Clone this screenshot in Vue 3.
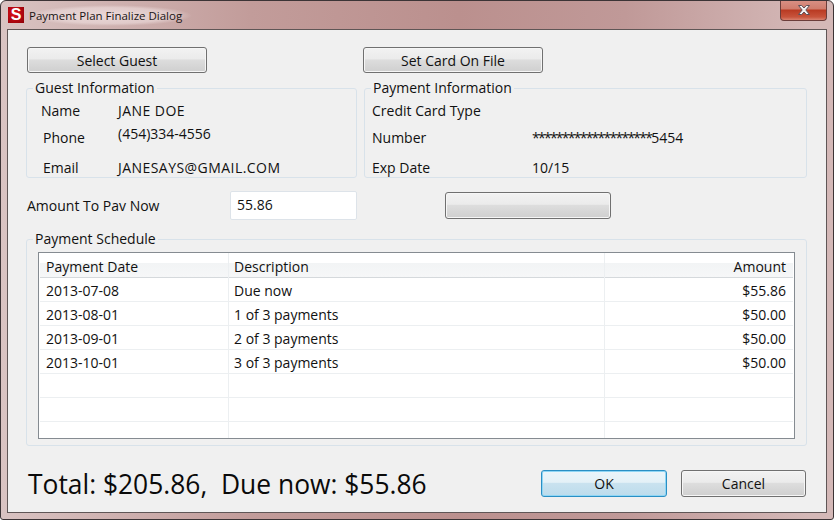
<script setup>
const rows = [
  { date: '2013-07-08', desc: 'Due now', amount: '$55.86' },
  { date: '2013-08-01', desc: '1 of 3 payments', amount: '$50.00' },
  { date: '2013-09-01', desc: '2 of 3 payments', amount: '$50.00' },
  { date: '2013-10-01', desc: '3 of 3 payments', amount: '$50.00' },
  { date: '', desc: '', amount: '' },
  { date: '', desc: '', amount: '' },
  { date: '', desc: '', amount: '' }
]
</script>

<template>
  <div class="window">
    <header class="titlebar">
      <span class="app-icon">S</span>
      <span class="title">Payment Plan Finalize Dialog</span>
      <span class="close">
        <svg width="18" height="12" viewBox="0 0 18 12">
          <path d="M3.5 1.5h3.2L9 4l2.3-2.5h3.2L10.8 6l3.7 4.5h-3.2L9 8l-2.3 2.5H3.5L7.2 6z" fill="#f4f1f1" stroke="#5c5058" stroke-width="1"/>
        </svg>
      </span>
    </header>
    <main class="client">
      <div class="top-buttons">
        <button class="btn wide">Select Guest</button>
        <button class="btn wide">Set Card On File</button>
      </div>
      <div class="groups">
        <fieldset class="group guest">
          <legend>Guest Information</legend>
          <div class="g-row g-name"><span class="g-label">Name</span><span class="caps">JANE DOE</span></div>
          <div class="g-row g-phone"><span class="g-label shifted">Phone</span><span class="phone-value">(454)334-4556</span></div>
          <div class="g-row g-email"><span class="g-label shifted">Email</span><span class="caps">JANESAYS@GMAIL.COM</span></div>
        </fieldset>
        <fieldset class="group pay">
          <legend>Payment Information</legend>
          <div class="p-row g-name"><span class="p-label">Credit Card Type</span><span></span></div>
          <div class="p-row g-phone"><span class="p-label">Number</span><span class="stars">********************<span class="digits">5454</span></span></div>
          <div class="p-row g-email"><span class="p-label">Exp Date</span><span>10/15</span></div>
        </fieldset>
      </div>
      <div class="amount-row">
        <label class="amount-label">Amount To Pav Now</label>
        <div class="amount-input">55.86</div>
        <button class="btn blank"></button>
      </div>
      <fieldset class="group schedule">
        <legend>Payment Schedule</legend>
        <div class="table">
          <div class="t-row t-head">
            <span>Payment Date</span><span>Description</span><span class="right">Amount</span>
          </div>
          <div v-for="(r, i) in rows" :key="i" class="t-row">
            <span>{{ r.date }}</span><span>{{ r.desc }}</span><span class="right">{{ r.amount }}</span>
          </div>
        </div>
      </fieldset>
      <footer class="footer">
        <div class="total">Total: $205.86,&nbsp; Due now: $55.86</div>
        <button class="btn ok">OK</button>
        <button class="btn cancel">Cancel</button>
      </footer>
    </main>
  </div>
</template>

<style>
html, body { margin: 0; background: #fff; }
</style>

<style scoped>
* { box-sizing: border-box; }
.window {
  width: 834px;
  height: 520px;
  display: flex;
  flex-direction: column;
  padding: 0 6px 6px;
  border: 1px solid #3c3436;
  border-radius: 6px 6px 3px 3px;
  background: linear-gradient(90deg, #d9c3c2 0%, #c29c9a 30%, #bb908e 55%, #c09998 75%, #d4b8b7 97%);
  font-family: "Open Sans", "Noto Sans", sans-serif;
  font-size: 14px;
  color: #111;
  overflow: hidden;
  margin: 0;
}
.titlebar {
  height: 28px;
  margin: 0 -1px;
  display: flex;
  align-items: center;
  flex: none;
  position: relative;
}
.app-icon {
  width: 16px;
  height: 16px;
  background: radial-gradient(circle at 40% 40%, #e0101a, #8c0008);
  color: #fff;
  font: bold 16px/16px "Liberation Sans", sans-serif;
  text-align: center;
  flex: none;
  margin-left: 2px;
}
.title {
  margin-left: 5px;
  font-size: 11.5px;
  color: #1a1414;
  background: radial-gradient(closest-side, rgba(240,225,225,.8), rgba(240,225,225,.55) 75%, rgba(240,225,225,0));
  padding: 3px 10px 3px 0;
}
.close {
  position: absolute;
  right: 1px;
  top: -1px;
  width: 47px;
  height: 21px;
  display: flex;
  align-items: center;
  justify-content: center;
  border: 1px solid #6b3d3a;
  border-top: none;
  border-radius: 0 0 4px 4px;
  background: linear-gradient(#d99186 0%, #d07c6c 45%, #b93a22 50%, #c8543c 85%, #d9826f 100%);
}
.client {
  flex: 1;
  background: #f0f0f0;
  border: 1px solid #5f5656;
  padding: 17px 18px 0 18px;
  display: flex;
  flex-direction: column;
  min-height: 0;
}
.btn {
  font: inherit;
  color: #111;
  border: 1px solid #707070;
  border-radius: 3px;
  background: linear-gradient(#f2f2f2 0%, #ebebeb 45%, #dddddd 50%, #cfcfcf 100%);
  box-shadow: inset 0 0 0 1px #f6f6f6;
  padding: 0;
}
.top-buttons {
  display: flex;
  gap: 156px;
  margin-left: 1px;
}
.wide { width: 180px; height: 26px; }
.groups {
  display: flex;
  gap: 7px;
  margin-top: 7px;
}
.group {
  margin: 0;
  border: 1px solid #d8e2ea;
  border-radius: 3px;
  padding: 0;
  min-width: 0;
}
.group legend {
  margin-left: 6px;
  padding: 0 2px;
  line-height: 16px;
  font-size: 14px;
}
.guest { width: 331px; height: 98px; }
.pay { width: 443px; height: 98px; }
.g-row { display: grid; grid-template-columns: 77px 1fr; padding-left: 14px; }
.p-row { display: grid; grid-template-columns: 160px 1fr; padding-left: 7px; }
.g-name { height: 20px; line-height: 20px; margin-top: 5px; }
.g-phone { height: 30px; line-height: 30px; margin-top: 2px; }
.g-email { height: 20px; line-height: 20px; margin-top: 5px; }
.shifted { padding-left: 2px; }
.phone-value { line-height: 20px; margin-top: 1px; }
.caps { letter-spacing: .45px; white-space: nowrap; }
.stars { letter-spacing: -1.75px; white-space: nowrap; }
.digits { letter-spacing: 0; }
.amount-row {
  display: flex;
  align-items: center;
  height: 29px;
  margin-top: 13px;
}
.amount-label { width: 204px; padding-left: 1px; }
.amount-input {
  width: 127px;
  height: 29px;
  background: #fff;
  border: 1px solid #dde3e9;
  border-radius: 2px;
  padding-left: 6px;
  line-height: 25px;
}
.blank { width: 166px; height: 27px; margin-left: 88px; }
.schedule {
  width: 781px;
  height: 215px;
  margin-top: 11px;
  flex: none;
}
.table {
  height: 187px;
  margin: 5px 11px 0;
  background: #fff;
  border: 1px solid #858b91;
  overflow: hidden;
  padding: 0 1px;
}
.t-row {
  display: grid;
  grid-template-columns: 189px 376px 189px;
  height: 24px;
  border-bottom: 1px solid #eceff1;
  line-height: 23px;
}
.t-row span {
  padding: 1px 6px 0;
  border-right: 1px solid #eceff1;
}
.t-row span:nth-child(2) { padding-left: 5px; }
.t-row span:last-child { border-right: none; padding-right: 8px; }
.t-head {
  height: 25px;
  line-height: 25px;
  background: linear-gradient(#fff 0%, #fff 40%, #f2f4f5 42%, #f6f7f8 100%);
  border-bottom: 1px solid #d5d9dc;
}
.right { text-align: right; }
.footer {
  display: flex;
  align-items: center;
  height: 27px;
  margin-top: 24px;
}
.total { font-size: 26.4px; width: 515px; padding-left: 2px; white-space: nowrap; color: #0a0a0a; }
.ok {
  width: 126px;
  height: 27px;
  border-color: #2a8fc4;
  background: linear-gradient(#eaf5fa 0%, #e4f1f7 45%, #c9e2ef 50%, #bcdcec 100%);
  box-shadow: inset 0 0 0 1px #8fd6f5;
}
.cancel { width: 125px; height: 27px; margin-left: 14px; }
</style>
